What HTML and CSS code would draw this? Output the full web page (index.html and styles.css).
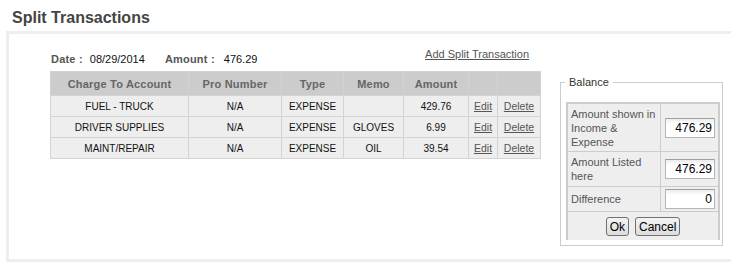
FILE: index.html
```html
<!DOCTYPE html>
<html>
<head>
<meta charset="utf-8">
<link rel="stylesheet" href="styles.css">
</head>
<body>
<h1 class="title">Split Transactions</h1>
<div class="panel">
  <div class="main">
    <div class="toolbar">
      <div class="summary">
        <span class="lbl">Date :</span><span class="val val-date">08/29/2014</span>
        <span class="lbl lbl-amt">Amount :</span><span class="val">476.29</span>
      </div>
      <a class="add-link" href="#">Add Split Transaction</a>
    </div>
    <table class="splits">
      <colgroup>
        <col class="c-acct"><col class="c-pro"><col class="c-type"><col class="c-memo"><col class="c-amt"><col class="c-edit"><col class="c-del">
      </colgroup>
      <thead>
        <tr><th>Charge To Account</th><th>Pro Number</th><th>Type</th><th>Memo</th><th>Amount</th><th></th><th></th></tr>
      </thead>
      <tbody>
        <tr><td>FUEL - TRUCK</td><td>N/A</td><td>EXPENSE</td><td></td><td>429.76</td><td><a href="#">Edit</a></td><td><a href="#">Delete</a></td></tr>
        <tr><td>DRIVER SUPPLIES</td><td>N/A</td><td>EXPENSE</td><td>GLOVES</td><td>6.99</td><td><a href="#">Edit</a></td><td><a href="#">Delete</a></td></tr>
        <tr><td>MAINT/REPAIR</td><td>N/A</td><td>EXPENSE</td><td>OIL</td><td>39.54</td><td><a href="#">Edit</a></td><td><a href="#">Delete</a></td></tr>
      </tbody>
    </table>
  </div>
  <fieldset class="balance">
    <legend>Balance</legend>
    <div class="bal-grid">
      <div class="bl">Amount shown in Income &amp; Expense</div>
      <div class="bv"><input class="num" type="text" value="476.29"></div>
      <div class="bl">Amount Listed here</div>
      <div class="bv"><input class="num" type="text" value="476.29"></div>
      <div class="bl bl-mid">Difference</div>
      <div class="bv"><input class="num" type="text" value="0"></div>
      <div class="actions">
        <button class="btn" type="button">Ok</button>
        <button class="btn" type="button">Cancel</button>
      </div>
    </div>
  </fieldset>
</div>
</body>
</html>
```

FILE: styles.css
```css
* { box-sizing: border-box; }
html, body { margin: 0; padding: 0; background: #fff; }
body {
  font-family: "Liberation Sans", Arial, sans-serif;
  font-size: 11px;
  color: #111;
  overflow: hidden;
}
.title {
  margin: 8px 0 3px 12px;
  font-size: 16px;
  line-height: 20px;
  font-weight: bold;
  color: #444;
}
.panel {
  margin-left: 6px;
  border: 3px solid #eee;
  border-right: none;
  height: 231px;
  display: flex;
  align-items: flex-start;
  padding-left: 41px;
}
.main { width: 490px; }
.toolbar {
  height: 37px;
  display: flex;
  justify-content: space-between;
  align-items: flex-start;
  padding-top: 14px;
}
.summary {
  margin-top: 5px;
  padding-left: 1px;
  line-height: 13px;
  white-space: nowrap;
}
.lbl { font-weight: bold; color: #555; margin-right: 7px; letter-spacing: 0.2px; }
.lbl-amt { margin-right: 9px; }
.val { color: #111; }
.val-date { margin-right: 17px; }
.add-link {
  line-height: 13px;
  color: #555;
  margin-right: 11px;
}
.splits {
  width: 490px;
  border-collapse: collapse;
  table-layout: fixed;
  border: 1px solid #d3d3d3;
}
.c-acct { width: 138px; }
.c-pro { width: 93px; }
.c-type { width: 62px; }
.c-memo { width: 60px; }
.c-amt { width: 65px; }
.c-edit { width: 29px; }
.c-del { width: 43px; }
.splits th, .splits td {
  border: 1px solid #d3d3d3;
  text-align: center;
  white-space: nowrap;
  padding: 0;
}
.splits th {
  background: #ccc;
  color: #666;
  font-weight: bold;
  font-size: 11px;
  letter-spacing: 0.2px;
  line-height: 14px;
  height: 24px;
}
.splits td {
  background: #eee;
  font-size: 10px;
  line-height: 13px;
  height: 21px;
  color: #111;
}
.splits td a { color: #555; font-size: 10.5px; }
.balance {
  margin: 42px 0 0 20px;
  width: 163px;
  border: 1px solid #ccc;
  padding: 14px 2px 5px 5px;
}
.balance legend {
  margin-left: -1px;
  padding: 0 4px;
  line-height: 12px;
  font-size: 11px;
  color: #333;
}
.bal-grid {
  width: 154px;
  display: grid;
  grid-template-columns: 93px 57px;
  grid-template-rows: 48px 35px 25px 28px;
  border: 2px solid #ccc;
  border-bottom: none;
  background: #eee;
}
.bl {
  padding: 3px 3px 2px 3px;
  line-height: 14px;
  color: #555;
  border-right: 1px solid #ccc;
  border-bottom: 1px solid #ccc;
}
.bl-mid { display: flex; align-items: center; padding-top: 1px; }
.bv {
  padding: 0 3px 0 4px;
  border-bottom: 1px solid #ccc;
  display: flex;
  align-items: center;
}
.num {
  width: 50px;
  height: 20px;
  margin: 0;
  padding: 0 2px 0 2px;
  border: 1px solid #b5b5b5;
  border-top-color: #a0a0a0;
  background: linear-gradient(#ececec, #fff 5px);
  text-align: right;
  font-family: "Liberation Sans", Arial, sans-serif;
  font-size: 12px;
  color: #000;
}
.actions {
  grid-column: 1 / 3;
  display: flex;
  justify-content: center;
  gap: 6px;
  padding: 5px 0 4px;
}
.btn {
  height: 19px;
  margin: 0;
  padding: 0 3px;
  border: 1px solid #707070;
  border-radius: 3px;
  background: linear-gradient(#f4f4f4, #dcdcdc);
  font-family: "Liberation Sans", Arial, sans-serif;
  font-size: 12px;
  line-height: 16px;
  color: #000;
}
```
